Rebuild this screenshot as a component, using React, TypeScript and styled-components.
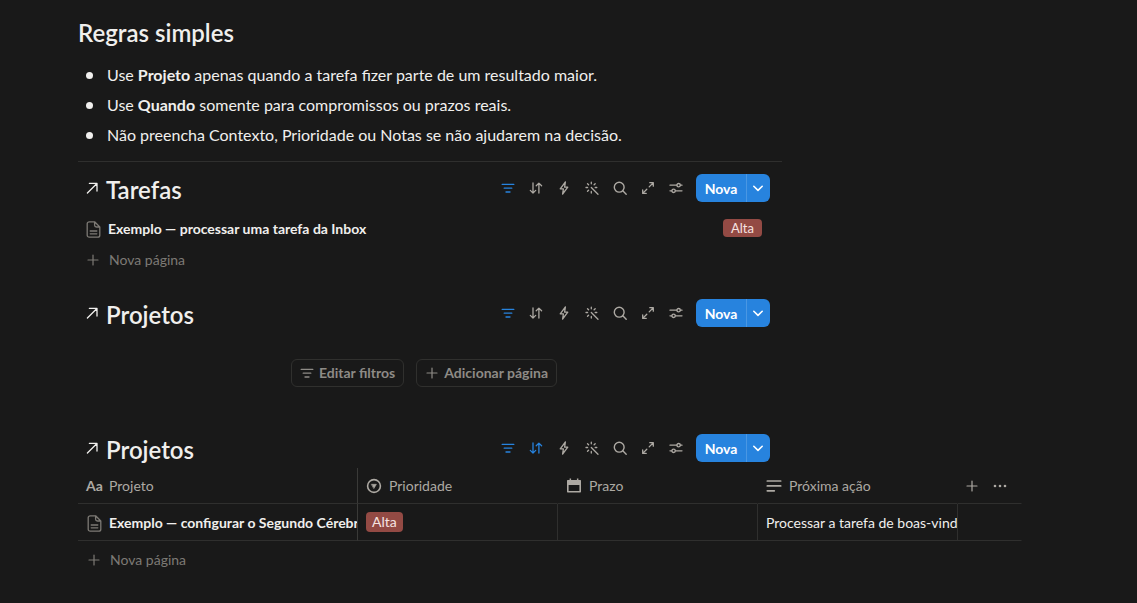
import React from "react";
import styled, { createGlobalStyle, css } from "styled-components";

const GlobalStyle = createGlobalStyle`
  *, *::before, *::after { box-sizing: border-box; }
  body {
    margin: 0;
    background: #191919;
    color: #f0efed;
    font-family: Lato, "Segoe UI", sans-serif;
    font-size: 16px;
    line-height: 24px;
  }
  button { font: inherit; color: inherit; background: none; border: 0; padding: 0; cursor: pointer; }
  a { color: inherit; text-decoration: none; }
`;

const Page = styled.main`
  padding: 17px 78px 24px;
`;

const Column = styled.div`
  max-width: 704px;
`;

const Heading = styled.h2`
  margin: 0 0 11px;
  font-size: 24px;
  font-weight: 600;
  line-height: 32px;
`;

const Rules = styled.ul`
  list-style: none;
  margin: 0;
  padding: 0;
`;

const Rule = styled.li`
  display: flex;
  align-items: center;
  gap: 14px;
  height: 30px;
  padding-left: 8px;

  &::before {
    content: "";
    flex: none;
    width: 7px;
    height: 7px;
    border-radius: 50%;
    background: currentColor;
  }

  b { font-weight: 700; }
`;

const Divider = styled.hr`
  margin: 11px 0 12px;
  border: 0;
  border-top: 1px solid #2f2f2e;
`;

const Database = styled.section<{ $gap?: number }>`
  margin-bottom: ${(p) => p.$gap ?? 0}px;
`;

const DatabaseHeader = styled.header`
  display: flex;
  align-items: center;
  justify-content: space-between;
  height: 28px;
  padding-right: 12px;
`;

const TitleLink = styled.a`
  display: flex;
  align-items: center;
  gap: 6px;
  padding-left: 6px;
`;

const Title = styled.h2`
  margin: 0;
  padding-top: 4px;
  font-size: 24px;
  font-weight: 600;
  line-height: 28px;
`;

const Toolbar = styled.div`
  display: flex;
  align-items: center;
`;

const ToolButton = styled.button<{ $active?: boolean }>`
  display: grid;
  place-items: center;
  width: 28px;
  height: 28px;
  color: ${(p) => (p.$active ? "#2783de" : "#ada9a3")};
`;

const SplitButton = styled.div`
  display: flex;
  height: 28px;
  margin-left: 6px;
  overflow: hidden;
  border-radius: 6px;
  background: #2783de;
  color: #fff;
`;

const NewButton = styled.button`
  width: 50px;
  padding-top: 2px;
  font-size: 14px;
  font-weight: 700;
  line-height: 20px;
`;

const MoreButton = styled.button`
  display: grid;
  place-items: center;
  width: 24px;
  padding-right: 1px;
  border-left: 1px solid #4a97e3;
`;

const ListRow = styled.div`
  display: flex;
  align-items: center;
  justify-content: space-between;
  height: 30px;
  margin-top: 12px;
  padding: 0 20px 0 7px;
`;

const PageLink = styled.a`
  display: flex;
  align-items: center;
  gap: 6px;
  font-size: 14px;
  font-weight: 700;
  line-height: 20px;
  white-space: nowrap;
`;

const Tag = styled.span`
  display: inline-flex;
  align-items: center;
  height: 20px;
  padding: 0 6px;
  border-radius: 4px;
  background: #934a44;
  color: #f6e3e1;
  font-size: 14px;
  line-height: 20px;
`;

const ListTag = styled(Tag)`
  height: 18px;
  margin-bottom: 2px;
  padding: 0 8px;
  font-size: 13px;
`;

const NewPage = styled.button<{ $tall?: boolean }>`
  display: flex;
  align-items: center;
  gap: 8px;
  height: ${(p) => (p.$tall ? 38 : 32)}px;
  padding-left: ${(p) => (p.$tall ? 8 : 7)}px;
  color: #7d7a75;
  font-size: 14px;
  line-height: 20px;
`;

const EmptyActions = styled.div`
  display: flex;
  justify-content: center;
  gap: 12px;
  margin-top: 32px;
  padding-right: 12px;
`;

const OutlineButton = styled.button`
  display: flex;
  align-items: center;
  gap: 4px;
  height: 28px;
  padding: 0 8px 0 7px;
  border: 1px solid #30302e;
  border-radius: 6px;
  color: #8e8b86;
  font-size: 14px;
  font-weight: 700;
  line-height: 20px;
`;

const TableScroll = styled.div`
  margin-top: 6px;
`;

const Table = styled.table`
  width: 944px;
  table-layout: fixed;
  border-collapse: separate;
  border-spacing: 0;
  font-size: 14px;
  line-height: 20px;
`;

const cell = css`
  padding: 0 0 0 8px;
  border-bottom: 1px solid #2f2f2e;
  text-align: left;
  white-space: nowrap;
  overflow: hidden;
`;

const HeadCell = styled.th<{ $ruled?: boolean }>`
  ${cell}
  height: 36px;
  color: #ada9a3;
  font-weight: 400;
  border-right: 1px solid ${(p) => (p.$ruled ? "#3a3a38" : "transparent")};
`;

const HeadLabel = styled.span`
  display: flex;
  align-items: center;
  gap: 7px;
`;

const TypeGlyph = styled.span`
  width: 16px;
  font-weight: 700;
`;

const HeadTools = styled.span`
  display: flex;
  align-items: center;
  margin-left: -8px;
`;

const BodyCell = styled.td<{ $ruled?: boolean; $last?: boolean }>`
  ${cell}
  height: 37px;
  border-right: 1px solid
    ${(p) => (p.$last ? "transparent" : p.$ruled ? "#3a3a38" : "#2f2f2e")};
`;

const CellText = styled.span`
  display: block;
  padding-top: 2px;
`;

type IconProps = { children: React.ReactNode; size?: number; width?: number };

const Icon = ({ children, size = 16, width = 1.2 }: IconProps) => (
  <svg
    width={size}
    height={size}
    viewBox={`0 0 ${size} ${size}`}
    fill="none"
    stroke="currentColor"
    strokeWidth={width}
    strokeLinecap="round"
    strokeLinejoin="round"
    aria-hidden="true"
  >
    {children}
  </svg>
);

const FilterIcon = () => (
  <Icon width={1.3}><path d="M2.2 4.4h11.6M4.2 8.2h7.6M6 12h4" /></Icon>
);
const SortIcon = () => (
  <Icon width={1.3}><path d="M5 3v10M2.3 10.4 5 13.1l2.7-2.7M10.9 13.1V3.1M8.2 5.8l2.7-2.7 2.7 2.7" /></Icon>
);
const BoltIcon = () => (
  <Icon width={1.3}><path d="M9.4 2 4.2 8.8h3.2L6.6 14l5.2-6.8H8.6L9.4 2z" /></Icon>
);
const WandIcon = () => (
  <Icon width={1.3}>
    <path d="M7.3 7.5 14 14.2M7.3 2.2v1.6M7.3 11.4V13M2 7.5h1.6M11.2 7.5h1.6M3.5 3.7l1.1 1.1M11.2 3.7l-1.1 1.1M3.5 11.3l1.1-1.1" />
  </Icon>
);
const SearchIcon = () => (
  <Icon width={1.4}><circle cx="7.2" cy="7.2" r="4.9" /><path d="m10.8 10.8 3.4 3.4" /></Icon>
);
const ExpandIcon = () => (
  <Icon width={1.3}><path d="m9.2 6.9 4.1-4.2M9.8 2.7h3.5v3.5M6.8 9.2l-4.1 4.2M2.7 9.9v3.5h3.5" /></Icon>
);
const SlidersIcon = () => (
  <Icon width={1.3}>
    <path d="M2 5.2h6.8M12.4 5.2H14M2 10.8h1.8M7.4 10.8H14" />
    <circle cx="10.6" cy="5.2" r="1.7" />
    <circle cx="5.6" cy="10.8" r="1.7" />
  </Icon>
);
const ChevronIcon = () => (
  <Icon width={1.6}><path d="m3.8 6.3 4.2 4.1 4.2-4.1" /></Icon>
);
const ArrowIcon = () => (
  <Icon width={1.3}><path d="M3.4 13 12.9 3.5M5.4 3.4h7.6V11" /></Icon>
);
const DocumentIcon = () => (
  <Icon size={17} width={1.3}>
    <path d="M9.6.8H4.2a2 2 0 0 0-2 2v11.4a2 2 0 0 0 2 2h8.6a2 2 0 0 0 2-2V6L9.6.8zM9.6.8v3.4A1.8 1.8 0 0 0 11.4 6h3.4M5.2 10h6.6M5.2 12.8h6.6" />
  </Icon>
);
const PlusIcon = () => (
  <Icon><path d="M8 3v10M3 8h10" /></Icon>
);
const SelectIcon = () => (
  <Icon width={1.6}>
    <circle cx="8" cy="8" r="6.4" />
    <path d="M5.6 6.3h4.8L8 10.3z" fill="currentColor" strokeWidth="0.6" />
  </Icon>
);
const CalendarIcon = () => (
  <Icon>
    <path
      d="M1.6 2h2V.6h1.5V2h5.8V.6h1.5V2h2c.3 0 .6.3.6.6v11c0 .6-.4 1-1 1H2c-.6 0-1-.4-1-1v-11c0-.3.3-.6.6-.6zM2.6 7v6h10.8V7z"
      fill="currentColor"
      fillRule="evenodd"
      stroke="none"
    />
  </Icon>
);
const TextIcon = () => (
  <Icon width={1.7}><path d="M1.3 3h13.4M1.3 7.9h13.4M1.3 12.8h7" /></Icon>
);
const DotsIcon = () => (
  <Icon>
    <g fill="currentColor" stroke="none">
      <circle cx="3" cy="8" r="1.3" /><circle cx="8" cy="8" r="1.3" /><circle cx="13" cy="8" r="1.3" />
    </g>
  </Icon>
);

const Muted = styled.span`
  display: flex;
  flex: none;
  color: #7d7a75;
`;

const Bar = ({ title, sorted }: { title: string; sorted?: boolean }) => (
  <DatabaseHeader>
    <TitleLink href="#">
      <ArrowIcon />
      <Title>{title}</Title>
    </TitleLink>
    <Toolbar>
      <ToolButton $active aria-label="Filtrar"><FilterIcon /></ToolButton>
      <ToolButton $active={sorted} aria-label="Ordenar"><SortIcon /></ToolButton>
      <ToolButton aria-label="Automações"><BoltIcon /></ToolButton>
      <ToolButton aria-label="Preenchimento automático"><WandIcon /></ToolButton>
      <ToolButton aria-label="Buscar"><SearchIcon /></ToolButton>
      <ToolButton aria-label="Abrir em página inteira"><ExpandIcon /></ToolButton>
      <ToolButton aria-label="Configurações"><SlidersIcon /></ToolButton>
      <SplitButton>
        <NewButton>Nova</NewButton>
        <MoreButton aria-label="Mais opções"><ChevronIcon /></MoreButton>
      </SplitButton>
    </Toolbar>
  </DatabaseHeader>
);

export default function App() {
  return (
    <>
      <GlobalStyle />
      <Page>
        <Column>
          <Heading>Regras simples</Heading>
          <Rules>
            <Rule><span>Use <b>Projeto</b> apenas quando a tarefa fizer parte de um resultado maior.</span></Rule>
            <Rule><span>Use <b>Quando</b> somente para compromissos ou prazos reais.</span></Rule>
            <Rule><span>Não preencha Contexto, Prioridade ou Notas se não ajudarem na decisão.</span></Rule>
          </Rules>
          <Divider />

          <Database $gap={23}>
            <Bar title="Tarefas" />
            <ListRow>
              <PageLink href="#">
                <Muted><DocumentIcon /></Muted>
                Exemplo — processar uma tarefa da Inbox
              </PageLink>
              <ListTag>Alta</ListTag>
            </ListRow>
            <NewPage><PlusIcon />Nova página</NewPage>
          </Database>

          <Database $gap={47}>
            <Bar title="Projetos" />
            <EmptyActions>
              <OutlineButton><FilterIcon />Editar filtros</OutlineButton>
              <OutlineButton><PlusIcon />Adicionar página</OutlineButton>
            </EmptyActions>
          </Database>

          <Database>
            <Bar title="Projetos" sorted />
            <TableScroll>
              <Table>
                <colgroup>
                  <col width="280" /><col width="200" /><col width="200" /><col width="200" /><col width="64" />
                </colgroup>
                <thead>
                  <tr>
                    <HeadCell $ruled><HeadLabel><TypeGlyph>Aa</TypeGlyph>Projeto</HeadLabel></HeadCell>
                    <HeadCell><HeadLabel><SelectIcon />Prioridade</HeadLabel></HeadCell>
                    <HeadCell><HeadLabel><CalendarIcon />Prazo</HeadLabel></HeadCell>
                    <HeadCell><HeadLabel><TextIcon />Próxima ação</HeadLabel></HeadCell>
                    <HeadCell>
                      <HeadTools>
                        <ToolButton aria-label="Adicionar propriedade"><PlusIcon /></ToolButton>
                        <ToolButton aria-label="Mais"><DotsIcon /></ToolButton>
                      </HeadTools>
                    </HeadCell>
                  </tr>
                </thead>
                <tbody>
                  <tr>
                    <BodyCell $ruled>
                      <CellText>
                        <PageLink href="#">
                          <Muted><DocumentIcon /></Muted>
                          Exemplo — configurar o Segundo Cérebro
                        </PageLink>
                      </CellText>
                    </BodyCell>
                    <BodyCell><Tag>Alta</Tag></BodyCell>
                    <BodyCell />
                    <BodyCell><CellText>Processar a tarefa de boas-vindas</CellText></BodyCell>
                    <BodyCell $last />
                  </tr>
                </tbody>
              </Table>
            </TableScroll>
            <NewPage $tall><PlusIcon />Nova página</NewPage>
          </Database>
        </Column>
      </Page>
    </>
  );
}
